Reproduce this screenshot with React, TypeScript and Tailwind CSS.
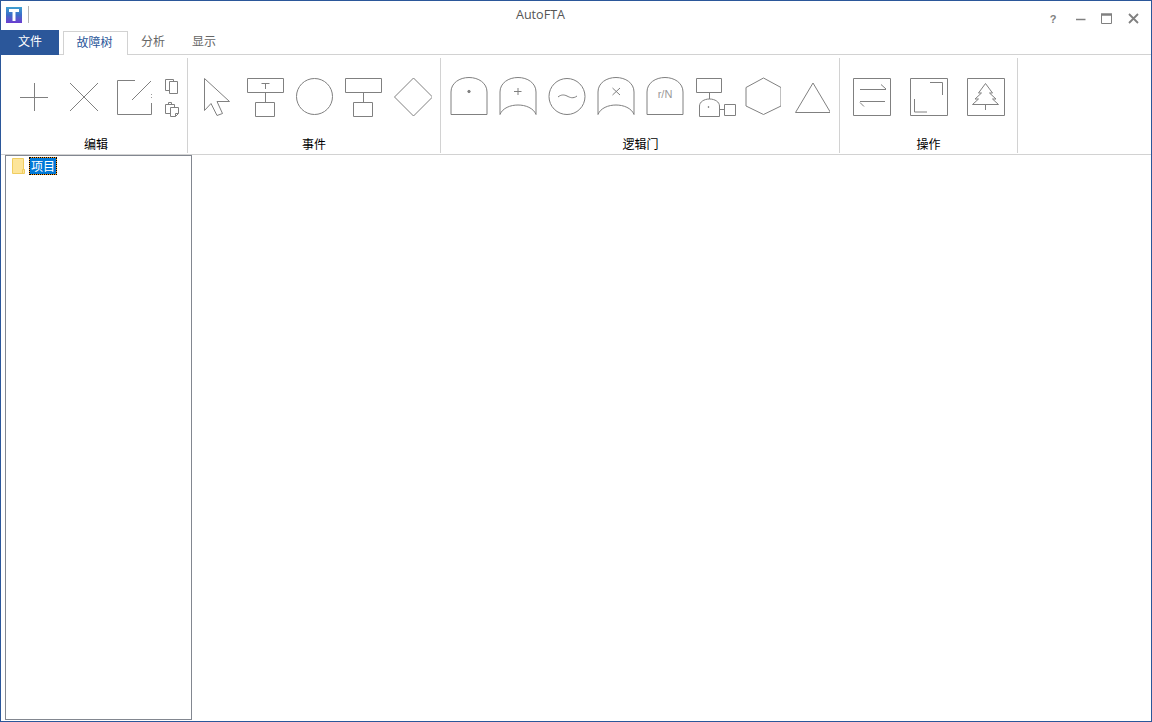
import React from 'react';

const Ico: React.FC<{ w?: number; h?: number; className?: string; children: React.ReactNode }> = ({ w = 40, h = 42, className, children }) => (
  <svg width={w} height={h} viewBox={`0 0 ${w} ${h}`} fill="none" stroke="#808080" strokeWidth={1} className={`block shrink-0 ${className ?? ''}`}>
    {children}
  </svg>
);

// gate outline, drawn in local coordinates of a 42 wide slot
const archTop = 'M4.5 38.5V16C4.5 7 13 1.5 22.5 1.5S40.5 7 40.5 16';
const Gate: React.FC<{ flat?: boolean; children?: React.ReactNode }> = ({ flat, children }) => (
  <Ico w={42}>
    <g transform="translate(-0.5 0)">
      {flat ? (
        <path d={`${archTop}V38.5Z`} />
      ) : (
        <path d={`${archTop}V38.5C38 32 30 29 22.5 29S7 32 4.5 38.5`} />
      )}
      {children}
    </g>
  </Ico>
);

const Group: React.FC<{ width: string; label: string; row: string; labelClass?: string; children: React.ReactNode }> = ({ width, label, row, labelClass, children }) => (
  <div className={`${width} mt-[3px] flex h-[95px] shrink-0 flex-col border-r border-[#d2d2d2]`}>
    <div className={`flex items-start pt-[18px] ${row}`}>{children}</div>
    <div className={`mt-auto mb-[1px] text-center text-[12px] leading-[16px] text-black ${labelClass ?? ''}`}>{label}</div>
  </div>
);

const EditIcons = () => (
  <>
    <Ico>
      <path d="M6 21.5H34M20.5 7V35" />
    </Ico>
    <Ico className="ml-[10px]">
      <path d="M6 7L34 35M34 7L6 35" />
    </Ico>
    <Ico className="ml-[11px]">
      <path d="M20 4.5H2.5V38.5H36.5V27M36.5 18V18.8M36.5 21V21.8M17 24L36 5" />
    </Ico>
    <div className="ml-[8px] flex flex-col gap-[5px]">
      <Ico w={18} h={18} className="mt-[2px]">
        <path d="M10.5 3.5V1.5H2.5V12.5H6.5" />
        <path d="M6.5 3.5H14.5V15.5H6.5Z" />
      </Ico>
      <Ico w={18} h={18}>
        <path d="M7.5 12.5H2.5V3.5H11.5V6.5M5.5 3.5V1.5H8.5V3.5" />
        <path d="M7.5 6.5H15.5V12.5L12.5 15.5H7.5ZM12.5 15.5V12.5H15.5" />
      </Ico>
    </div>
  </>
);

const EventIcons = () => (
  <>
    <Ico>
      <path d="M8.5 2.5V34.5L15 27.5L21 39.5L26.5 37.5L21 25.5H33.5Z" />
    </Ico>
    <Ico className="ml-[9px]">
      <path d="M2.5 2.5H38.5V16.5H2.5ZM20.5 16.5V26M10.5 26.5H29.5V40.5H10.5ZM16.5 7.5H24.5M20.5 7.5V13" />
    </Ico>
    <Ico className="ml-[9px]">
      <circle cx="20.5" cy="20.5" r="18" />
    </Ico>
    <Ico className="ml-[9px]">
      <path d="M2.5 2.5H38.5V16.5H2.5ZM20.5 16.5V26M10.5 26.5H29.5V40.5H10.5Z" />
    </Ico>
    <Ico className="ml-[9px]">
      <path d="M21.5 2L40.5 21L21.5 40L2.5 21Z" />
    </Ico>
  </>
);

const GateIcons = () => (
  <>
    <Gate flat>
      <circle cx="22.5" cy="15.5" r="1.2" fill="#808080" />
    </Gate>
    <div className="ml-[7px]">
      <Gate>
        <path d="M18.5 15.5H26M22.5 12V19" />
      </Gate>
    </div>
    <Ico w={42} className="ml-[7px]">
      <circle cx="22" cy="20.5" r="18" />
      <path d="M13 21C16 18.5 19 18.5 22 20S28 23 32 20" />
    </Ico>
    <div className="ml-[7px]">
      <Gate>
        <path d="M19 12L26.5 19M26.5 12L19 19" />
      </Gate>
    </div>
    <div className="ml-[7px]">
      <Gate flat>
        <text x="22.5" y="22" textAnchor="middle" fontSize="11" fontWeight="400" fill="#999999" stroke="none" fontFamily="'Liberation Sans', sans-serif">r/N</text>
      </Gate>
    </div>
    <Ico w={44} className="ml-[7px]">
      <path d="M4.5 2.5H29.5V16.5H4.5ZM17.5 16.5V23M7.5 40.5V30C7.5 26 12 23 17.5 23S27.5 26 27.5 30V40.5ZM27.5 33.5H32.5M32.5 28.5H43.5V39.5H32.5Z" />
      <circle cx="16.5" cy="31" r="0.5" fill="#808080" />
    </Ico>
    <Ico className="ml-[5px]">
      <path d="M22.5 2L40 11.5V30L22.5 38.5L5 30V11.5Z" />
    </Ico>
    <Ico className="ml-[9px]">
      <path d="M23 7L40.5 36.5H5.5Z" />
    </Ico>
  </>
);

const OpIcons = () => (
  <>
    <Ico w={39}>
      <path d="M0.5 2.5H37.5V39.5H0.5ZM7 13.5H33M28 8.5L33 13M7 25.5H32M7 26.5L11 30.5" />
    </Ico>
    <Ico w={39} className="ml-[18px]">
      <path d="M0.5 2.5H37.5V39.5H0.5ZM20 6.5H32.5V19M4.5 23V36H17" />
    </Ico>
    <Ico w={39} className="ml-[18px]">
      <path d="M0.5 2.5H37.5V39.5H0.5ZM18.5 7.5L11.5 17H14.5L8 23H11.5L5.5 28.5H31.5L25.5 23H29L22.5 17H25.5ZM18.5 28.5V34" />
    </Ico>
  </>
);

export default function App() {
  return (
    <div className="flex h-[722px] w-[1152px] flex-col overflow-hidden border border-[#2b579a] bg-white [font-family:'Noto_Sans_CJK_SC',sans-serif]">
      {/* title bar */}
      <div className="flex h-[29px] shrink-0 items-start">
        <div className="mt-[6px] ml-[5px] flex h-[16px] w-[16px] items-center justify-center bg-gradient-to-b from-[#3fa0d0] via-[#3a6cc8] to-[#6a3bd0]">
          <span className="h-[12px] w-[10px] bg-white [clip-path:polygon(0_0,100%_0,100%_25%,65%_25%,65%_100%,35%_100%,35%_25%,0_25%)]" />
        </div>
        <div className="mt-[5px] ml-[6px] h-[17px] w-[1px] bg-[#b4b4b4]" />
        <div className="flex-1 pt-[6px] pl-[3px] text-center text-[12.6px] leading-[16px] text-[#555555] [font-family:'Open_Sans',sans-serif]">AutoFTA</div>
        <div className="flex items-start pt-[12px] pr-[12px]">
          <span className="mr-[19px] w-[8px] text-center text-[11px] leading-[12px] font-bold text-[#808080] [font-family:'Liberation_Sans',sans-serif]">?</span>
          <svg width="10" height="10" viewBox="0 0 10 10" className="mt-[1px] mr-[15px]"><path d="M0 5.5H9.5" stroke="#808080" strokeWidth="1.5" /></svg>
          <svg width="11" height="11" viewBox="0 0 11 11" fill="none" className="mr-[16px]"><path d="M0.5 1.5H10.5V10.5H0.5Z" stroke="#808080" /><path d="M0 1.5H11" stroke="#808080" strokeWidth="2.5" /></svg>
          <svg width="11" height="11" viewBox="0 0 11 11"><path d="M1 1L10 10M10 1L1 10" stroke="#808080" strokeWidth="1.8" /></svg>
        </div>
      </div>

      {/* tabs */}
      <div className="flex h-[25px] shrink-0 items-stretch border-b border-[#d2d2d2] text-[12px]">
        <div className="mb-[-1px] flex w-[58px] items-center justify-center bg-[#2b579a] pb-[3px] text-white">文件</div>
        <div className="mt-[1px] mb-[-1px] ml-[4px] flex w-[65px] items-center justify-center border-x border-t border-[#d2d2d2] bg-white pr-[2px] pb-[3px] text-[#2b579a]">故障树</div>
        <div className="ml-[13px] flex items-center pb-[2px] text-[#666666]">分析</div>
        <div className="ml-[27px] flex items-center pb-[2px] text-[#666666]">显示</div>
      </div>

      {/* ribbon */}
      <div className="flex h-[100px] shrink-0 items-start border-b border-[#d2d2d2]">
        <Group width="w-[187px]" label="编辑" row="pl-[13px]" labelClass="pl-[4px]"><EditIcons /></Group>
        <Group width="w-[253px]" label="事件" row="pl-[8px]"><EventIcons /></Group>
        <Group width="w-[399px]" label="逻辑门" row="pl-[6px]" labelClass="pl-[1px]"><GateIcons /></Group>
        <Group width="w-[178px]" label="操作" row="pl-[13px]"><OpIcons /></Group>
      </div>

      {/* project tree */}
      <div className="flex min-h-0 flex-1 items-stretch pl-[4px] pb-[1px]">
        <div className="w-[187px] border border-[#828790] bg-white pt-[2px] pl-[6px]">
          <div className="flex items-start">
            <svg width="13" height="16" viewBox="0 0 13 16" className="block shrink-0">
              <path d="M0.5 0.5H11.5V11.5H12.5V15.5H0.5Z" fill="#fde59a" stroke="#f0cd60" />
              <path d="M10.5 15.5V11.5H12.5" fill="none" stroke="#f0cd60" />
            </svg>
            <span className="mt-[-1px] ml-[4px] border border-dotted border-black bg-[#f59a23] text-[12px] leading-[16px] text-white">
              <span className="block bg-[#0078d7] px-[1px]">项目</span>
            </span>
          </div>
        </div>
      </div>
    </div>
  );
}
